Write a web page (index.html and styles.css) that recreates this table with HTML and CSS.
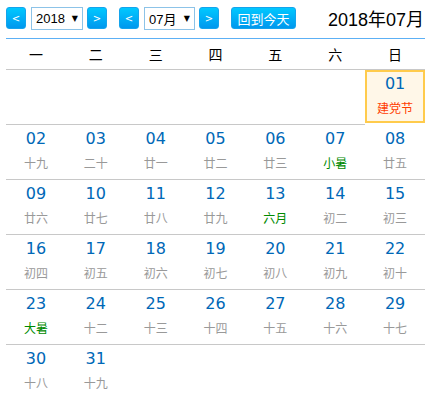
FILE: index.html
```html
<!DOCTYPE html>
<html lang="zh-CN">
  <head>
    <meta charset="UTF-8" />
    <meta name="viewport" content="width=device-width, initial-scale=1.0" />
    <title>万年历</title>
    <link rel="stylesheet" href="styles.css">
  </head>
  <body>
    <div class="toolbar">
      <div class="picker">
        <span class="btn btn-arrow">&lt;</span>
        <span class="select select-year">2018<i class="caret">▼</i></span>
        <span class="btn btn-arrow">&gt;</span>
      </div>
      <div class="picker">
        <span class="btn btn-arrow">&lt;</span>
        <span class="select select-month">07月<i class="caret">▼</i></span>
        <span class="btn btn-arrow">&gt;</span>
      </div>
      <span class="btn btn-today">回到今天</span>
      <div class="title">2018年07月</div>
    </div>

    <div class="calendar">
      <div class="week">
        <span>一</span><span>二</span><span>三</span><span>四</span><span>五</span><span>六</span><span>日</span>
      </div>
      <div id="days" class="days">
        <!-- 日期由脚本生成 -->
      </div>
    </div>

    <script>
      // 2018年7月 农历 / 节气 / 节日
      const days = [
        ["01", "建党节", "fest"],
        ["02", "十九"], ["03", "二十"], ["04", "廿一"], ["05", "廿二"],
        ["06", "廿三"], ["07", "小暑", "term"], ["08", "廿五"],
        ["09", "廿六"], ["10", "廿七"], ["11", "廿八"], ["12", "廿九"],
        ["13", "六月", "term"], ["14", "初二"], ["15", "初三"],
        ["16", "初四"], ["17", "初五"], ["18", "初六"], ["19", "初七"],
        ["20", "初八"], ["21", "初九"], ["22", "初十"],
        ["23", "大暑", "term"], ["24", "十二"], ["25", "十三"], ["26", "十四"],
        ["27", "十五"], ["28", "十六"], ["29", "十七"],
        ["30", "十八"], ["31", "十九"],
      ];
      const firstWeekday = 6; // 7月1日是星期日
      const today = "01";

      const box = document.getElementById("days");
      let html = "";
      for (let i = 0; i < firstWeekday; i++) {
        html += '<div class="day empty"></div>';
      }
      days.forEach(([num, lunar, kind]) => {
        html += `
          <div class="day${num === today ? " today" : ""}">
            <div class="num">${num}</div>
            <div class="lunar ${kind || ""}">${lunar}</div>
          </div>`;
      });
      const total = firstWeekday + days.length;
      for (let i = total; i % 7 !== 0; i++) {
        html += '<div class="day empty"></div>';
      }
      box.innerHTML = html;
    </script>
  </body>
</html>
```

FILE: styles.css
```css
body {
  margin: 0;
  padding: 6px 5px 0 6px;
  background: #fff;
  color: #000;
  font-family: "Liberation Sans", "Noto Sans CJK SC", sans-serif;
}

.toolbar {
  display: flex;
  align-items: center;
  height: 24px;
  margin-bottom: 8px;
}

.picker {
  display: flex;
  align-items: center;
  gap: 4px;
  margin-right: 12px;
}

.btn {
  display: inline-flex;
  align-items: center;
  justify-content: center;
  height: 22px;
  box-sizing: border-box;
  border: 1px solid #14a4ec;
  border-radius: 3px;
  background: linear-gradient(#00c8ff, #0098ee);
  color: #fff;
  font-size: 12px;
}

.btn-arrow {
  width: 20px;
  font-family: "DejaVu Sans", sans-serif;
  font-size: 10px;
}

.btn-today {
  width: 65px;
  font-size: 13px;
}

.select {
  display: inline-flex;
  align-items: center;
  justify-content: space-between;
  height: 23px;
  box-sizing: border-box;
  padding: 0 4px 0 4px;
  border: 1px solid #8cc3e8;
  background: #fff;
  font-size: 13px;
  margin-left: 1px;
}

.select-year {
  width: 52px;
}

.select-month {
  width: 51px;
}

.caret {
  font-style: normal;
  font-size: 8px;
  font-family: "DejaVu Sans", sans-serif;
}

.title {
  margin-left: auto;
  margin-right: 1px;
  font-size: 18px;
}

.calendar {
  border-top: 1px solid #5cb0f5;
}

.week,
.days {
  display: grid;
  grid-template-columns: repeat(7, 1fr);
}

.week span {
  height: 30px;
  line-height: 30px;
  text-align: center;
  font-size: 14px;
  border-bottom: 1px solid #c8c8c8;
  font-family: "Noto Sans CJK SC", sans-serif;
}

.day {
  height: 54px;
  border-bottom: 1px solid #c8c8c8;
  text-align: center;
}

.day .num {
  padding-top: 4px;
  line-height: 20px;
  font-family: "DejaVu Sans", sans-serif;
  font-size: 16px;
  color: #0068b7;
}

.day .lunar {
  margin-top: 6px;
  line-height: 16px;
  font-size: 12px;
  color: #999;
  font-family: "Noto Sans CJK SC", sans-serif;
}

.day .lunar.term {
  color: #008a00;
}

.day .lunar.fest {
  color: #ff3c00;
}

.day.today {
  height: 53px;
  box-sizing: border-box;
  border: 2px solid #ffcb4c;
  background: #fff7e8;
  margin-bottom: 1px;
}

.day.today .num {
  padding-top: 2px;
}

.day.today .lunar {
  margin-top: 6px;
}
```
